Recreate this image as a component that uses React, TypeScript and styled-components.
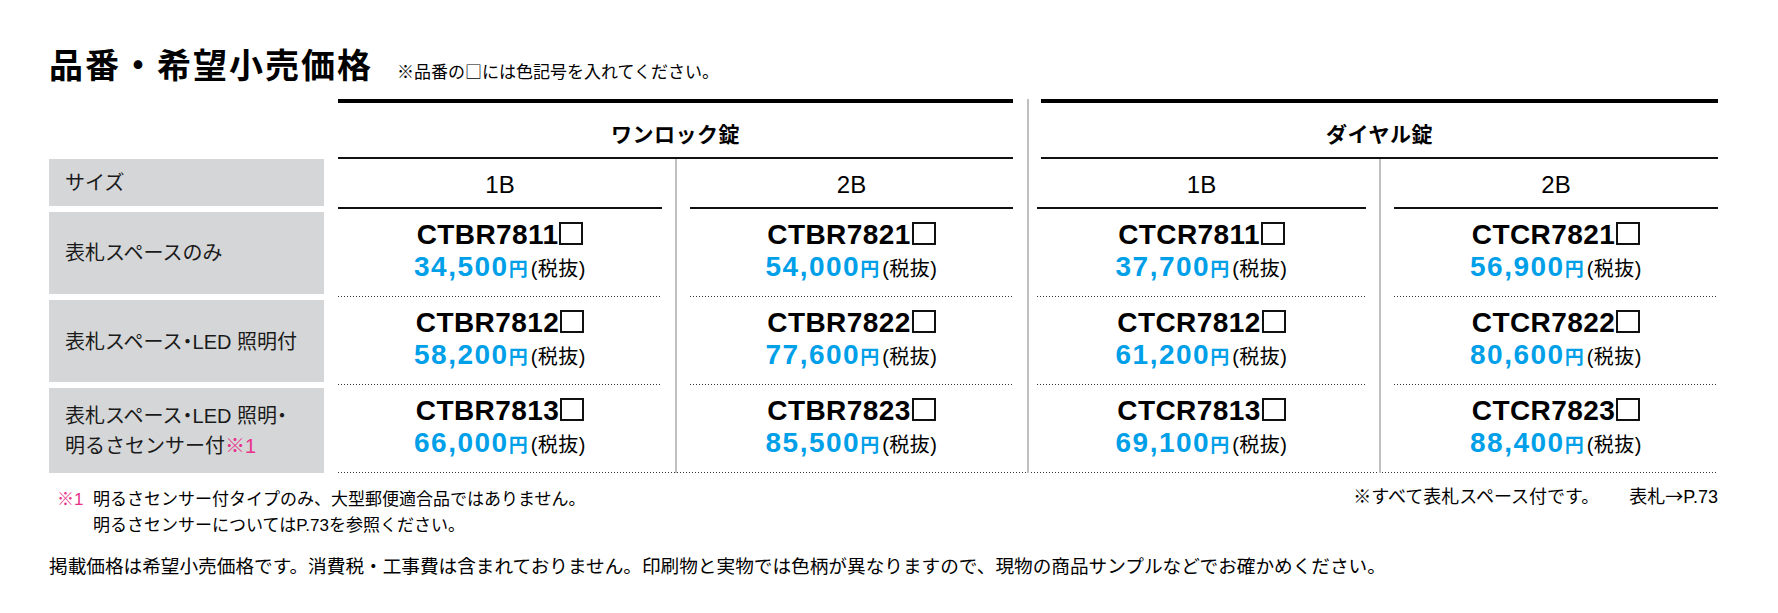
import React from "react";
import styled, { createGlobalStyle } from "styled-components";

const GlobalStyle = createGlobalStyle`
  html, body {
    margin: 0;
    padding: 0;
    background: #fff;
  }
  body {
    font-family: "Liberation Sans", "Noto Sans CJK JP", sans-serif;
    color: #1a1a1a;
  }
`;

const BLUE = "#00a0e9";
const PINK = "#e8308a";

const Page = styled.div`
  width: 1778px;
  height: 613px;
  box-sizing: border-box;
  padding: 47px 0 0 49px;
  overflow: hidden;
`;

const Heading = styled.div`
  display: flex;
  align-items: baseline;
  height: 34px;
  margin-bottom: 18px;
`;

const Title = styled.h1`
  margin: 0;
  font-family: "Noto Sans CJK JP", sans-serif;
  font-size: 34px;
  line-height: 34px;
  font-weight: 700;
  letter-spacing: 2px;
  color: #000;
`;

const Subtitle = styled.span`
  margin-left: 24px;
  font-family: "Noto Sans CJK JP", sans-serif;
  font-size: 17px;
  color: #000;
`;

const Table = styled.div`
  display: grid;
  grid-template-columns: 275px 14px 324px 28px 323px 24px 329px 28px 324px;
  grid-template-rows: 60px 50px 88px 88px 88px;
`;

const GroupHead = styled.div<{ $start: number; $end: number; $inset?: number }>`
  grid-column: ${(p) => p.$start} / ${(p) => p.$end};
  grid-row: 1;
  margin-left: ${(p) => p.$inset || 0}px;
  border-top: 4px solid #000;
  border-bottom: 2px solid #111;
  display: flex;
  align-items: center;
  justify-content: center;
  padding-top: 6px;
  font-family: "Noto Sans CJK JP", sans-serif;
  font-size: 21px;
  font-weight: 700;
  letter-spacing: 0.5px;
  color: #000;
`;

const SizeCell = styled.div<{ $col: number }>`
  grid-column: ${(p) => p.$col};
  grid-row: 2;
  border-bottom: 2px solid #111;
  display: flex;
  align-items: center;
  justify-content: center;
  padding-top: 4px;
  font-size: 24px;
  color: #000;
`;

const Label = styled.div<{ $row: number; $mt: number; $mb: number }>`
  grid-column: 1;
  grid-row: ${(p) => p.$row};
  margin: ${(p) => p.$mt}px 0 ${(p) => p.$mb}px;
  background: #d5d6d7;
  display: flex;
  flex-direction: column;
  justify-content: center;
  padding-left: 16px;
  font-size: 20px;
  line-height: 30px;
  color: #1a1a1a;
`;

const MidDot = styled.span`
  font-family: "Noto Sans CJK JP", sans-serif;
  font-feature-settings: "palt";
`;

const Mark = styled.span`
  color: ${PINK};
`;

const dots = `linear-gradient(to right, #333 1px, transparent 1px) left bottom / 3px 1px repeat-x`;

const DataCell = styled.div<{ $col: number; $row: number; $last?: boolean }>`
  grid-column: ${(p) => p.$col};
  grid-row: ${(p) => p.$row};
  display: flex;
  flex-direction: column;
  align-items: center;
  justify-content: center;
  padding-bottom: 1px;
  background: ${(p) => (p.$last ? "none" : dots)};
`;

const Code = styled.div`
  font-size: 28px;
  line-height: 32px;
  font-weight: 700;
  letter-spacing: 0.4px;
  color: #000;
  white-space: nowrap;
`;

const ColorBox = styled.span`
  display: inline-block;
  width: 24px;
  height: 23px;
  box-sizing: border-box;
  border: 2px solid #111;
  margin-left: 1px;
  vertical-align: -1px;
`;

const Price = styled.div`
  line-height: 32px;
  white-space: nowrap;
`;

const Amount = styled.span`
  font-size: 28px;
  font-weight: 700;
  letter-spacing: 1.5px;
  color: ${BLUE};
`;

const Yen = styled.span`
  font-family: "Noto Sans CJK JP", sans-serif;
  font-size: 19px;
  font-weight: 700;
  color: ${BLUE};
`;

const Tax = styled.span`
  font-size: 20px;
  letter-spacing: 0.5px;
  margin-left: 3px;
  color: #000;
`;

const BottomRule = styled.div`
  grid-column: 3 / 10;
  grid-row: 5;
  align-self: end;
  height: 1px;
  background: ${dots};
`;

const VLine = styled.div<{ $col: number; $from: number; $offset: number }>`
  grid-column: ${(p) => p.$col};
  grid-row: ${(p) => p.$from} / 6;
  justify-self: start;
  width: 2px;
  margin-left: ${(p) => p.$offset}px;
  background: #c0c0c0;
`;

const FootRow = styled.div`
  display: flex;
  justify-content: space-between;
  width: 1669px;
  margin-top: 9px;
  font-size: 17px;
  line-height: 26px;
  color: #000;
`;

const Notes = styled.div`
  padding: 5px 0 0 8px;
`;

const NoteLine = styled.div<{ $indent?: boolean }>`
  display: flex;
  padding-left: ${(p) => (p.$indent ? 36 : 0)}px;
`;

const NoteMark = styled.span`
  width: 36px;
  color: ${PINK};
`;

const SideNote = styled.div`
  font-size: 18px;
  white-space: nowrap;
`;

const SideRef = styled.span`
  margin-left: 30px;
`;

const Arrow = styled.span`
  font-family: "Noto Sans CJK JP", sans-serif;
`;

const Disclaimer = styled.p`
  margin: 15px 0 0;
  font-size: 18.65px;
  line-height: 26px;
  color: #000;
`;

type Column = { size: string; col: number; items: [string, string][] };

const groups: { name: string; start: number; end: number; inset?: number; cols: Column[] }[] = [
  {
    name: "ワンロック錠",
    start: 3,
    end: 6,
    cols: [
      { size: "1B", col: 3, items: [["CTBR7811", "34,500"], ["CTBR7812", "58,200"], ["CTBR7813", "66,000"]] },
      { size: "2B", col: 5, items: [["CTBR7821", "54,000"], ["CTBR7822", "77,600"], ["CTBR7823", "85,500"]] },
    ],
  },
  {
    name: "ダイヤル錠",
    start: 7,
    end: 10,
    inset: 4,
    cols: [
      { size: "1B", col: 7, items: [["CTCR7811", "37,700"], ["CTCR7812", "61,200"], ["CTCR7813", "69,100"]] },
      { size: "2B", col: 9, items: [["CTCR7821", "56,900"], ["CTCR7822", "80,600"], ["CTCR7823", "88,400"]] },
    ],
  },
];

const App = () => {
  return (
    <Page>
      <GlobalStyle />
      <Heading>
        <Title>品番・希望小売価格</Title>
        <Subtitle>※品番の□には色記号を入れてください。</Subtitle>
      </Heading>

      <Table>
        {groups.map((g) => (
          <GroupHead key={g.name} $start={g.start} $end={g.end} $inset={g.inset}>
            {g.name}
          </GroupHead>
        ))}

        <Label $row={2} $mt={0} $mb={3}>サイズ</Label>
        <Label $row={3} $mt={3} $mb={3}>表札スペースのみ</Label>
        <Label $row={4} $mt={3} $mb={3}>
          <span>
            表札スペース<MidDot>・</MidDot>LED 照明付
          </span>
        </Label>
        <Label $row={5} $mt={3} $mb={0}>
          <span>
            表札スペース<MidDot>・</MidDot>LED 照明<MidDot>・</MidDot>
          </span>
          <span>
            明るさセンサー付<Mark>※1</Mark>
          </span>
        </Label>

        {groups.map((g) =>
          g.cols.map((c) => (
            <React.Fragment key={g.name + c.size}>
              <SizeCell $col={c.col}>{c.size}</SizeCell>
              {c.items.map(([code, price], i) => (
                <DataCell key={code} $col={c.col} $row={i + 3} $last={i === 2}>
                  <Code>
                    {code}
                    <ColorBox />
                  </Code>
                  <Price>
                    <Amount>{price}</Amount>
                    <Yen>円</Yen>
                    <Tax>(税抜)</Tax>
                  </Price>
                </DataCell>
              ))}
            </React.Fragment>
          ))
        )}

        <BottomRule />
        <VLine $col={4} $from={2} $offset={13} />
        <VLine $col={6} $from={1} $offset={14} />
        <VLine $col={8} $from={2} $offset={13} />
      </Table>

      <FootRow>
        <Notes>
          <NoteLine>
            <NoteMark>※1</NoteMark>
            <span>明るさセンサー付タイプのみ、大型郵便適合品ではありません。</span>
          </NoteLine>
          <NoteLine $indent>明るさセンサーについてはP.73を参照ください。</NoteLine>
        </Notes>
        <SideNote>
          ※すべて表札スペース付です。
          <SideRef>
            表札<Arrow>→</Arrow>P.73
          </SideRef>
        </SideNote>
      </FootRow>

      <Disclaimer>
        掲載価格は希望小売価格です。消費税・工事費は含まれておりません。印刷物と実物では色柄が異なりますので、現物の商品サンプルなどでお確かめください。
      </Disclaimer>
    </Page>
  );
};

export default App;
